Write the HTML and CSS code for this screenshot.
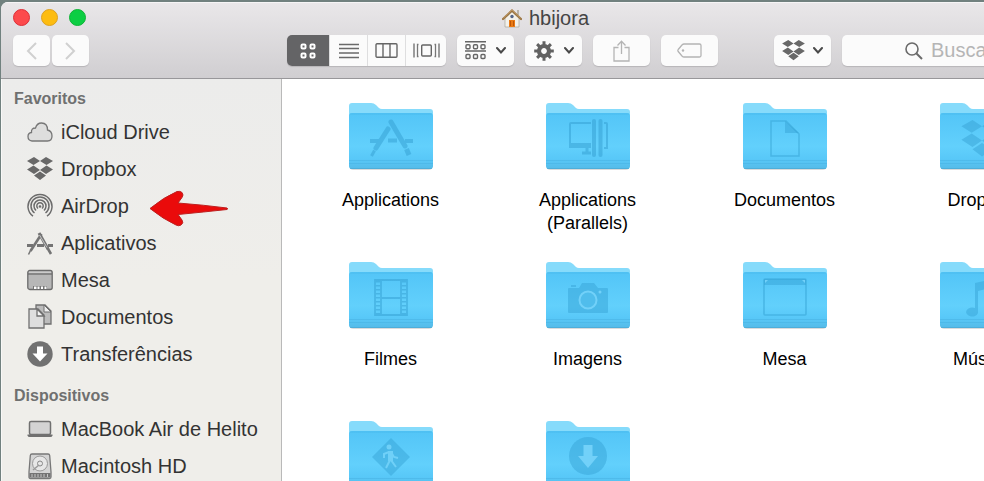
FILE: index.html
```html
<!DOCTYPE html>
<html lang="pt-BR">
<head>
<meta charset="utf-8">
<title>hbijora</title>
<link rel="stylesheet" href="styles.css">
</head>
<body>
<svg class="defs" aria-hidden="true">
  <defs>
    <linearGradient id="front" x1="0" y1="0" x2="0" y2="1">
      <stop offset="0" stop-color="#53c5f7"/>
      <stop offset=".6" stop-color="#62d0fc"/>
      <stop offset=".82" stop-color="#58c8f8"/>
      <stop offset="1" stop-color="#55bbe8"/>
    </linearGradient>
    <symbol id="folder" viewBox="0 0 84 70">
      <rect x="1" y="60" width="82" height="8" rx="3" fill="#000" opacity=".14"/>
      <path d="M0 14V4Q0 1 3 1H22Q25 1 27 3L30 6Q31 7 33 7H81Q84 7 84 10V20H0Z" fill="#86dbfb"/>
      <path d="M0 14Q0 11 3 11H81Q84 11 84 14V64Q84 67 81 67H3Q0 67 0 64Z" fill="url(#front)"/>
      <path d="M1 12H83" stroke="#44b6ea" opacity=".6"/>
      <path d="M0 58.500H84M0 61.500H84" stroke="#3fa9db" opacity=".35"/>
      <path d="M1 66.500H83" stroke="#4aa9d4" opacity=".7"/>
    </symbol>
    <symbol id="dropbox" viewBox="0 0 26 24">
      <path d="M7 0L13 4L6.500 8L0 4ZM19 0L26 4L19.500 8L13 4ZM6.500 8.500L13 13L7 17L0 12.500ZM19.500 8.500L26 12.500L19 17L13 13ZM13 14.500L19 18.500L13 23L7 18.500Z"/>
    </symbol>
    <symbol id="chevron" viewBox="0 0 10 7">
      <path d="M1 1L5 5.500L9 1" fill="none" stroke="#4a4a4a" stroke-width="2" stroke-linecap="round"/>
    </symbol>
  </defs>
</svg>

<div class="window">
  <header class="chrome">
    <div class="titlebar">
      <div class="lights">
        <button class="light close" aria-label="Fechar"></button>
        <button class="light minimize" aria-label="Minimizar"></button>
        <button class="light zoom" aria-label="Ampliar"></button>
      </div>
      <h1 class="title">
        <svg width="20" height="20" viewBox="0 0 20 20" aria-hidden="true">
          <path d="M15 2H17V7H15Z" fill="#b9b4ac"/>
          <path d="M3 10L10 4L17 10V19H3Z" fill="#f3f1ea" stroke="#a7a39a" stroke-width=".7"/>
          <path d="M1 11L10 2.500L19 11" fill="none" stroke="#9b7440" stroke-width="2.200" stroke-linecap="round"/>
          <path d="M1.500 10L10 1.800L18.500 10" fill="none" stroke="#c9a878" stroke-width=".8"/>
          <circle cx="10" cy="8.500" r="1.700" fill="#54668a"/>
          <path d="M7 12H13V19H7Z" fill="#ea7a13"/>
          <path d="M8.500 13V18M11.500 13V18" stroke="#bd5606"/>
        </svg>
        <span>hbijora</span>
      </h1>
    </div>
    <div class="toolbar">
      <div class="history">
        <button class="tool step" aria-label="Voltar"><svg width="11" height="18" viewBox="0 0 11 18"><path d="M10 1L2 9L10 17" fill="none" stroke="#d0d0d0" stroke-width="2"/></svg></button>
        <button class="tool step" aria-label="Avançar"><svg width="11" height="18" viewBox="0 0 11 18"><path d="M1 1L9 9L1 17" fill="none" stroke="#d0d0d0" stroke-width="2"/></svg></button>
      </div>
      <div class="views">
        <button class="view active" aria-label="Ícones"><svg width="16" height="16" viewBox="0 0 16 16"><g fill="none" stroke="#fff" stroke-width="2"><rect x="1.500" y="1.500" width="4" height="4" rx="1"/><rect x="10.500" y="1.500" width="4" height="4" rx="1"/><rect x="1.500" y="10.500" width="4" height="4" rx="1"/><rect x="10.500" y="10.500" width="4" height="4" rx="1"/></g></svg></button>
        <button class="view" aria-label="Lista"><svg width="20" height="16" viewBox="0 0 20 16"><path d="M0 1.500H20M0 5.500H20M0 10H20M0 14.500H20" stroke="#6a6a6a" stroke-width="1.400"/></svg></button>
        <button class="view" aria-label="Colunas"><svg width="23" height="15" viewBox="0 0 23 15"><path d="M2 .8H21Q22 .8 22 2V13Q22 14.200 21 14.200H2Q1 14.200 1 13V2Q1 .8 2 .8ZM8 1V14M15 1V14" fill="none" stroke="#666" stroke-width="1.400"/></svg></button>
        <button class="view" aria-label="Cover Flow"><svg width="27" height="15" viewBox="0 0 27 15"><path d="M1 .5V14.500M26 .5V14.500" stroke="#6a6a6a" stroke-width="1.300"/><path d="M5.500 1.500H4.500V13.500H5.500M21.500 1.500H22.500V13.500H21.500" fill="none" stroke="#777" stroke-width="1.300"/><rect x="8.700" y="2" width="9.600" height="11" rx="1" fill="none" stroke="#666" stroke-width="1.400"/></svg></button>
      </div>
      <button class="tool" aria-label="Organizar">
        <svg width="21" height="19" viewBox="0 0 21 19"><path d="M0 .8H21M0 10H21" stroke="#666" stroke-width="1.400"/><g fill="none" stroke="#666" stroke-width="1.400"><rect x="1" y="3.700" width="4" height="4" rx="1"/><rect x="8.500" y="3.700" width="4" height="4" rx="1"/><rect x="16" y="3.700" width="4" height="4" rx="1"/><rect x="1" y="13.500" width="4" height="4" rx="1"/><rect x="8.500" y="13.500" width="4" height="4" rx="1"/><rect x="16" y="13.500" width="4" height="4" rx="1"/></g></svg>
        <svg width="10" height="7"><use href="#chevron"/></svg>
      </button>
      <button class="tool" aria-label="Ações">
        <svg width="20" height="20" viewBox="-10 -10 20 20"><g stroke="#626262" stroke-width="3"><path d="M0-9.800V9.800M-9.800 0H9.800M-6.900-6.900L6.900 6.900M-6.900 6.900L6.900-6.900"/></g><circle r="5" fill="#fbfbfb" stroke="#626262" stroke-width="4.200"/></svg>
        <svg width="10" height="7"><use href="#chevron"/></svg>
      </button>
      <button class="tool" aria-label="Compartilhar"><svg width="17" height="22" viewBox="0 0 17 22"><path d="M5.500 7.500H1V21H16V7.500H11.500M8.500 14V1.500M4.500 5.500L8.500 1.200L12.500 5.500" fill="none" stroke="#b4b4b4" stroke-width="1.300"/></svg></button>
      <button class="tool" aria-label="Etiquetas"><svg width="25" height="15" viewBox="0 0 25 15"><path d="M7 1H22.500Q24 1 24 2.500V12.500Q24 14 22.500 14H7Q6 14 5.200 13.200L1.200 8.500Q.5 7.500 1.200 6.500L5.200 1.800Q6 1 7 1Z" fill="none" stroke="#b4b4b4" stroke-width="1.300"/><circle cx="6" cy="7.500" r="1.200" fill="#b4b4b4"/></svg></button>
      <button class="tool apart" aria-label="Dropbox">
        <svg class="solid" width="23" height="21"><use href="#dropbox"/></svg>
        <svg width="10" height="7"><use href="#chevron"/></svg>
      </button>
      <label class="search">
        <svg width="18" height="18" viewBox="0 0 18 18" role="img" aria-label="Buscar"><circle cx="7" cy="7" r="6" fill="none" stroke="#6a6a6a" stroke-width="1.600"/><path d="M11.500 11.500L17 17" stroke="#6a6a6a" stroke-width="2"/></svg>
        <input type="search" placeholder="Buscar">
      </label>
    </div>
  </header>

  <div class="body">
    <nav class="sidebar">
      <h2>Favoritos</h2>
      <ul>
        <li><a href="#"><svg width="26" height="26" viewBox="0 0 26 26"><path d="M5 22Q1 21.500 1 17.500Q1 14 4.500 13.500Q4 9 8.500 9Q10 4 14.500 4Q20.500 4 20.500 11Q25 12 25 17Q25 22 20.500 22Z" fill="#dededd" stroke="#777" stroke-width="1.300"/></svg>iCloud Drive</a></li>
        <li><a href="#"><svg class="solid" width="26" height="24"><use href="#dropbox"/></svg>Dropbox</a></li>
        <li><a href="#"><svg width="26" height="26" viewBox="0 0 26 26"><g fill="none" stroke="#6c6c6c" stroke-width="1.500"><path d="M6 23.200A12 12 0 1 1 20 23.200"/><path d="M7.500 20A9 9 0 1 1 18.500 20"/><path d="M9 17.500A6 6 0 1 1 17 17.500"/><path d="M11 15.500A3.200 3.200 0 1 1 15 15.500"/></g><circle cx="13" cy="13.500" r="1.300" fill="#6c6c6c"/></svg>AirDrop</a>
          <svg class="arrow" width="80" height="37" viewBox="0 -3 80 37" aria-hidden="true"><path d="M1 18.500Q15 7 28 1.500Q31 .8 33 2.500Q35 5 33 7.500L29 13Q55 15 78 18Q79.500 18.800 78 19.500Q55 22 29 24.500L33 30Q35 33 32 35Q30 36.500 27 35Q14 29 1 18.500Z" fill="#ea0b0b" stroke="#bd2020"/></svg></li>
        <li><a href="#"><svg width="26" height="26" viewBox="0 0 26 26"><g fill="none" stroke="#747474"><path d="M0 15.500H6M10 15.500H17M21 15.500H26" stroke-width="3"/><path d="M14.500 4L3.500 21" stroke-width="2.600"/><path d="M12 3L21 19" stroke-width="3"/><path d="M20.500 18L24 24" stroke-width="2.600"/><path d="M3.500 20.500L1.500 24.500" stroke-width="1.600"/><path d="M12.500 5L20 17.500" stroke="#c4c4c4" stroke-width="1"/></g></svg>Aplicativos</a></li>
        <li><a href="#"><svg width="26" height="22" viewBox="0 0 26 22"><rect x=".8" y="1.500" width="24.400" height="19" rx="2" fill="#b7b7b7" stroke="#6b6b6b" stroke-width="1.300"/><path d="M1 5H25" stroke="#6b6b6b" stroke-width="1.300"/><path d="M2 3.200H24" stroke="#d4d4d4"/><path d="M6 17H20V20H6Z" fill="#777"/><path d="M7 17.500H9.500V20H7ZM10.500 17.500H12.500V20H10.500ZM14 17.500H16V20H14ZM17.500 17.500H19.500V20H17.500Z" fill="#fff"/></svg>Mesa</a></li>
        <li><a href="#"><svg width="26" height="26" viewBox="0 0 26 26"><path d="M9 1H18L24 7V20H9Z" fill="#bcbcbc" stroke="#707070" stroke-width="1.300"/><path d="M17 1V8H24Z" fill="#eee" stroke="#707070"/><path d="M2 5H11L17 11V24H2Z" fill="#dedede" stroke="#707070" stroke-width="1.300"/><path d="M10 5V12H17Z" fill="#f4f4f4" stroke="#707070" stroke-width="1.300"/></svg>Documentos</a></li>
        <li><a href="#"><svg width="26" height="26" viewBox="0 0 26 26"><circle cx="13" cy="13" r="12.700" fill="#717171"/><path d="M10 5.500H16V12.500H20.500L13 20.500L5.500 12.500H10Z" fill="#fff"/></svg>Transferências</a></li>
      </ul>
      <h2>Dispositivos</h2>
      <ul>
        <li><a href="#"><svg width="26" height="18" viewBox="0 0 26 18"><rect x="2.500" y="1.500" width="21" height="13" rx="1.500" fill="#d3d3d3" stroke="#707070" stroke-width="1.500"/><path d="M.5 14.500H25.500V15.500Q25 17 23.500 17H2.500Q1 17 .5 15.500Z" fill="#707070"/></svg>MacBook Air de Helito</a></li>
        <li><a href="#"><svg width="26" height="28" viewBox="0 0 26 28"><path d="M5 2H21Q22.500 2 22.700 3.500L24 20V25Q24 26.500 22.500 26.500H3.500Q2 26.500 2 25V20L3.300 3.500Q3.500 2 5 2Z" fill="#d4d4d4" stroke="#777" stroke-width="1.300"/><circle cx="13" cy="11.500" r="7.500" fill="#e7e7e7" stroke="#999"/><circle cx="13" cy="11.500" r="2.500" fill="none" stroke="#888"/><path d="M6 18L12 13" stroke="#999" stroke-width="1.500"/><path d="M2.500 21H23.500V25.500H2.500Z" fill="#737373"/><path d="M5 22V25M8 22V25M11 22V25M14 22V25M17 22V25M20.500 22V25" stroke="#c7c7c7"/></svg>Macintosh HD</a></li>
      </ul>
    </nav>

    <main class="files">
      <figure class="file">
        <svg class="icon" viewBox="0 0 84 70"><use href="#folder"/><g class="line"><path d="M21 39H31M39 38.500H48M56 39H64" stroke-width="4"/><path d="M42 20L56 44" stroke-width="5" stroke-linecap="round"/><path d="M39 27L27 46" stroke-width="5" stroke-linecap="round"/><path d="M57.500 47L60 53" stroke-width="5"/><path d="M25.500 48.500L22.500 54" stroke-width="3"/></g></svg>
        <figcaption>Applications</figcaption>
      </figure>
      <figure class="file">
        <svg class="icon" viewBox="0 0 84 70"><use href="#folder"/><g class="line"><path d="M45 21H25Q24 21 24 22V41M58 21H60Q61 21 61 22V46H58" stroke-width="2"/><path d="M23 43.500H45" stroke-width="5"/><path d="M48 19V53M54.500 19V53" stroke-width="4" stroke-linecap="round"/><path d="M36 51H45M41 46V49.500" stroke-width="3"/></g></svg>
        <figcaption>Applications (Parallels)</figcaption>
      </figure>
      <figure class="file">
        <svg class="icon" viewBox="0 0 84 70"><use href="#folder"/><path class="line" d="M28 19H43L56 32V54H28Z" stroke-width="1.500"/><path class="fill" d="M42 19L56 31H42Z"/></svg>
        <figcaption>Documentos</figcaption>
      </figure>
      <figure class="file">
        <svg class="icon" viewBox="0 0 84 70"><use href="#folder"/><g class="fill"><use href="#dropbox" x="21" y="18" width="42" height="38"/></g></svg>
        <figcaption>Dropbox</figcaption>
      </figure>
      <figure class="file">
        <svg class="icon" viewBox="0 0 84 70"><use href="#folder"/><g class="line"><path d="M26 19H58V54H26ZM32 19V54M52 19V54M32 37H52" stroke-width="1.800"/><path d="M29 20V53M55 20V53" stroke-width="5" stroke-dasharray="1.500 2.500"/></g></svg>
        <figcaption>Filmes</figcaption>
      </figure>
      <figure class="file">
        <svg class="icon" viewBox="0 0 84 70"><use href="#folder"/><path class="fill" d="M23 27H33L36 22H48L52 27H61Q62 27 62 28V51Q62 52 61 52H23Q22 52 22 51V28Q22 27 23 27ZM25 24H30V26H25Z"/><circle cx="42" cy="39" r="8.500" fill="#50bdec" stroke="#72d1f9" stroke-width="2"/><circle cx="54" cy="31" r="1.500" fill="#72d1f9"/></svg>
        <figcaption>Imagens</figcaption>
      </figure>
      <figure class="file">
        <svg class="icon" viewBox="0 0 84 70"><use href="#folder"/><rect class="line" x="21" y="18" width="42" height="36" rx="1" stroke-width="1.600"/><path class="fill" d="M21 18H63V24H21Z"/><path d="M22 19H25L22 22ZM62 19H59L62 22Z" fill="#72d1f9"/></svg>
        <figcaption>Mesa</figcaption>
      </figure>
      <figure class="file">
        <svg class="icon" viewBox="0 0 84 70"><use href="#folder"/><path class="fill" d="M35 22L57 17V48A6 4.500 0 1 1 54 43V26L38 30V52A6 4.500 0 1 1 35 47Z"/></svg>
        <figcaption>Música</figcaption>
      </figure>
      <figure class="file">
        <svg class="icon" viewBox="0 0 84 70"><use href="#folder"/><path class="fill" d="M42 18L61 37L42 56L23 37Z"/><circle cx="40" cy="27" r="2.500" fill="#6fd0f8"/><path d="M41 32L42 40L47 47M41 40L37 48M40 32L35 34V38M42 32L45 37L49 38" fill="none" stroke="#6fd0f8" stroke-width="2"/><path d="M39 31H44V41H39Z" fill="#6fd0f8"/></svg>
        <figcaption>Público</figcaption>
      </figure>
      <figure class="file">
        <svg class="icon" viewBox="0 0 84 70"><use href="#folder"/><circle class="fill" cx="42" cy="36" r="19"/><path d="M37.500 25H46.500V36H52L42 48L32 36H37.500Z" fill="#72d1f9"/></svg>
        <figcaption>Transferências</figcaption>
      </figure>
    </main>
  </div>
</div>
</body>
</html>
```

FILE: styles.css
```css
* {
  box-sizing: border-box;
}

body {
  margin: 0;
  height: 100vh;
  padding: 2px 0 0 1px;
  overflow: hidden;
  background: #71817f;
  font-family: "Liberation Sans", Arial, sans-serif;
  font-size: 20px;
  color: #333;
}

button {
  padding: 0;
  border: 0;
  font: inherit;
}

svg {
  display: block;
  flex: none;
}

.defs {
  position: absolute;
  width: 0;
  height: 0;
}

/* The window continues past the right edge of the desktop. */
.window {
  display: flex;
  flex-direction: column;
  width: calc(100% + 106px);
  min-height: 100%;
  border-radius: 7px 0 0 0;
  overflow: hidden;
  background: #fff;
}

.chrome {
  border-top: 1px solid #f6f5f6;
  border-bottom: 1px solid #98979a;
  background: linear-gradient(#e9e7e9, #d0ced1);
}

.titlebar {
  display: grid;
  grid-template-columns: 1fr auto 1fr;
  align-items: center;
  height: 29px;
  padding: 0 12px;
}

.lights {
  display: flex;
  gap: 11px;
}

.light {
  width: 17px;
  height: 17px;
  border-radius: 50%;
}

.close {
  background: #fc4a4c;
  border: 1px solid #dc2f38;
}

.minimize {
  background: #fdbc10;
  border: 1px solid #dca021;
}

.zoom {
  background: #0cce43;
  border: 1px solid #0fb336;
}

.title {
  display: flex;
  align-items: center;
  gap: 7px;
  margin: 0;
  font-size: 20px;
  font-weight: 400;
  line-height: 24px;
  color: #454545;
}

.toolbar {
  display: flex;
  gap: 11px;
  padding: 3px 12px 12px;
}

.history {
  display: flex;
  flex: none;
  gap: 2px;
  margin-right: 187px;
}

.tool,
.view,
.search {
  display: flex;
  align-items: center;
  justify-content: center;
  height: 31px;
  background: #fbfbfb;
}

.tool {
  flex: none;
  gap: 10px;
  width: 57px;
  border-radius: 5px;
  box-shadow: 0 1px 1px #b7b5b8;
}

.step {
  width: 37px;
}

.apart {
  gap: 8px;
  margin-left: 45px;
}

.views {
  display: flex;
  flex: none;
  border-radius: 5px;
  overflow: hidden;
  box-shadow: 0 1px 1px #b7b5b8;
}

.view {
  width: 38px;
  border-left: 1px solid #dededf;
}

.view:last-child {
  width: 41px;
}

.view.active {
  width: 42px;
  border: 0;
  background: #646466;
}

.solid {
  fill: #686868;
}

.search {
  flex: 1;
  justify-content: flex-start;
  gap: 8px;
  min-width: 0;
  padding-left: 63px;
  border-radius: 5px;
  box-shadow: 0 1px 1px #b7b5b8;
}

.search input {
  flex: 1;
  min-width: 0;
  padding: 0;
  border: 0;
  background: none;
  font: inherit;
}

.search input::placeholder {
  color: #b5b5b5;
  opacity: 1;
}

.body {
  display: flex;
  flex: 1;
}

.sidebar {
  flex: none;
  width: 281px;
  padding: 6px 0 0 12px;
  border-left: 1px solid #f8f8f7;
  border-right: 1px solid #b9b9b9;
  background: linear-gradient(#ececeb, #efeeea 40%);
}

.sidebar h2 {
  margin: 0;
  font-size: 16px;
  line-height: 28px;
  color: #6f7070;
}

.sidebar ul {
  margin: 0 0 10px;
  padding: 0;
  list-style: none;
}

.sidebar li {
  display: flex;
  align-items: center;
  height: 37px;
  padding-left: 13px;
}

.sidebar a {
  display: flex;
  align-items: center;
  gap: 8px;
  line-height: 24px;
  color: inherit;
  text-decoration: none;
}

.arrow {
  margin-left: 20px;
  overflow: visible;
}

.files {
  display: grid;
  grid-template-columns: repeat(4, 197px);
  grid-auto-rows: 159px;
  align-content: start;
  padding: 23px 0 0 10px;
}

.file {
  display: flex;
  flex-direction: column;
  align-items: center;
  gap: 17px;
  margin: 0;
  font-size: 18px;
  line-height: 23px;
  text-align: center;
  color: #000;
}

.file figcaption {
  max-width: 120px;
}

.icon {
  width: 84px;
  height: 70px;
}

.line {
  fill: none;
  stroke: #349fd2;
  opacity: .5;
}

.fill {
  fill: #349fd2;
  opacity: .45;
}
```
